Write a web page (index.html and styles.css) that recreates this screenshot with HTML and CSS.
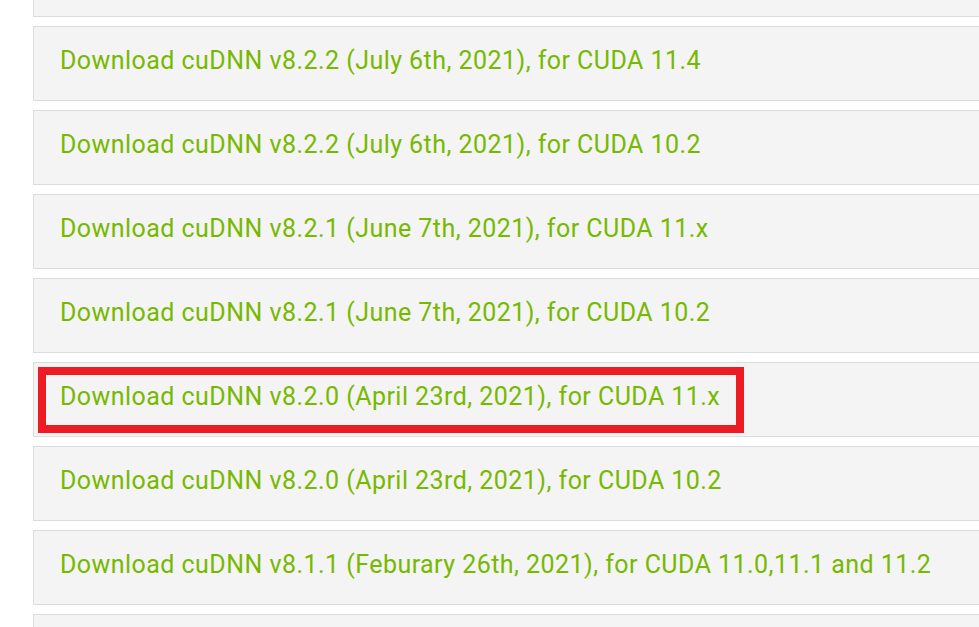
FILE: index.html
```html
<!DOCTYPE html>
<html>
<head>
<meta charset="utf-8">
<link rel="stylesheet" href="styles.css">
</head>
<body>
<div class="list">
  <div class="panel"></div>
  <div class="panel"><a class="link" href="#">Download cuDNN v8.2.2 (July 6th, 2021), for CUDA 11.4</a></div>
  <div class="panel"><a class="link" href="#">Download cuDNN v8.2.2 (July 6th, 2021), for CUDA 10.2</a></div>
  <div class="panel"><a class="link" href="#">Download cuDNN v8.2.1 (June 7th, 2021), for CUDA 11.x</a></div>
  <div class="panel"><a class="link" href="#">Download cuDNN v8.2.1 (June 7th, 2021), for CUDA 10.2</a></div>
  <div class="panel highlighted"><a class="link" href="#">Download cuDNN v8.2.0 (April 23rd, 2021), for CUDA 11.x</a><span class="mark"></span></div>
  <div class="panel"><a class="link" href="#">Download cuDNN v8.2.0 (April 23rd, 2021), for CUDA 10.2</a></div>
  <div class="panel"><a class="link" href="#">Download cuDNN v8.1.1 (Feburary 26th, 2021), for CUDA 11.0,11.1 and 11.2</a></div>
  <div class="panel"></div>
</div>
</body>
</html>
```
FILE: styles.css
```css
html, body {
  margin: 0;
  padding: 0;
  background: #ffffff;
  overflow: hidden;
}
.list {
  display: flex;
  flex-direction: column;
  gap: 9px;
  margin-top: -58px;
  padding-left: 33px;
  width: 1000px;
}
.panel {
  position: relative;
  box-sizing: border-box;
  height: 75px;
  background: #f4f4f4;
  border: 1px solid #dcdcdc;
  display: flex;
  align-items: center;
  padding-left: 26px;
  padding-bottom: 6px;
}
.link {
  font-family: Roboto, "Liberation Sans", sans-serif;
  font-size: 25px;
  letter-spacing: 0.45px;
  color: #76b900;
  text-decoration: none;
  white-space: nowrap;
}
.mark {
  position: absolute;
  left: 4px;
  top: 4px;
  width: 706px;
  height: 66px;
  box-sizing: border-box;
  border: 8px solid #ed1c24;
}
```
